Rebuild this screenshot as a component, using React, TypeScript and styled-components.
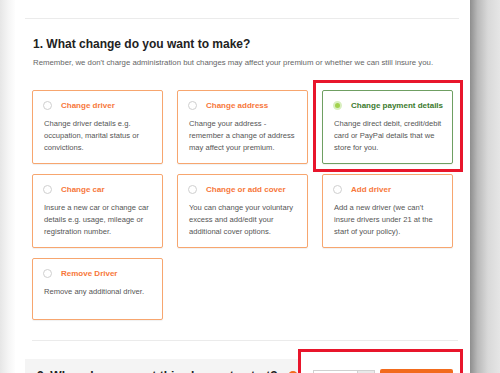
import styled, { createGlobalStyle } from "styled-components";

const GlobalStyle = createGlobalStyle`
  html, body {
    margin: 0;
    padding: 0;
    background: #fff;
  }
  body {
    font-family: "Liberation Sans", Arial, Helvetica, sans-serif;
  }
`;

interface iOption {
  title: string;
  text: string;
  selected?: boolean;
}

const options: iOption[] = [
  {
    title: "Change driver",
    text: "Change driver details e.g. occupation, marital status or convictions.",
  },
  {
    title: "Change address",
    text: "Change your address - remember a change of address may affect your premium.",
  },
  {
    title: "Change payment details",
    text: "Change direct debit, credit/debit card or PayPal details that we store for you.",
    selected: true,
  },
  {
    title: "Change car",
    text: "Insure a new car or change car details e.g. usage, mileage or registration number.",
  },
  {
    title: "Change or add cover",
    text: "You can change your voluntary excess and add/edit your additional cover options.",
  },
  {
    title: "Add driver",
    text: "Add a new driver (we can't insure drivers under 21 at the start of your policy).",
  },
  {
    title: "Remove Driver",
    text: "Remove any additional driver.",
  },
];

const Page = styled.div`
  display: flex;
  height: 373px;
  overflow: hidden;
`;

const LeftShade = styled.div`
  width: 15px;
  flex-shrink: 0;
  background: linear-gradient(to right, #e6e6e6, #f6f6f6 60%, #fdfdfd);
`;

const RightShade = styled.div`
  flex: 1;
  background: linear-gradient(to right, #8e8e8e, #b9b9b9 25%, #d9d9d9 60%, #e6e6e6);
`;

const Panel = styled.div`
  width: 455px;
  flex-shrink: 0;
  background: #fff;
  padding: 18px 0 0 10px;
  box-sizing: border-box;
`;

const Rule = styled.div<{ width: number }>`
  height: 1px;
  width: ${({ width }) => width}px;
  background: #ebebeb;
`;

const Section = styled.div`
  padding-left: 7px;
`;

const Heading = styled.h2`
  margin: 18px 0 0 1px;
  font-size: 12px;
  line-height: 14px;
  font-weight: 700;
  color: #222;
`;

const Intro = styled.p`
  margin: 7px 0 0 1px;
  font-size: 7.8px;
  line-height: 10px;
  color: #666;
`;

const Grid = styled.div`
  display: grid;
  grid-template-columns: repeat(3, 131px);
  column-gap: 14px;
  row-gap: 10px;
  margin-top: 22px;
`;

const Card = styled.div<{ selected?: boolean }>`
  position: relative;
  box-sizing: border-box;
  min-height: 62px;
  padding: 8px 8px 9px 10px;
  border: 1px solid ${({ selected }) => (selected ? "#6f9f62" : "#f7a66f")};
  border-radius: 2px;
  background: #fff;
  box-shadow: 0 1px 1px rgba(0, 0, 0, 0.06);
`;

const CardHead = styled.div`
  display: flex;
  align-items: center;
  height: 12px;
`;

const Radio = styled.span<{ selected?: boolean }>`
  width: 9px;
  height: 9px;
  box-sizing: border-box;
  border-radius: 50%;
  margin-right: 9px;
  flex-shrink: 0;
  border: ${({ selected }) => (selected ? "2px solid #d9efc0" : "1px solid #cfcfcf")};
  background: ${({ selected }) => (selected ? "#a2d24e" : "#fff")};
`;

const CardTitle = styled.span<{ selected?: boolean }>`
  font-size: 8px;
  font-weight: 700;
  color: ${({ selected }) => (selected ? "#3b7a2d" : "#f7773a")};
`;

const CardText = styled.p`
  margin: 7px 0 0 1px;
  font-size: 7.6px;
  line-height: 12px;
  color: #555;
`;

const Callout = styled.div`
  position: absolute;
  top: -11px;
  left: -10px;
  right: -11px;
  bottom: -9px;
  border: 3px solid #e8152b;
  pointer-events: none;
`;

const BottomRule = styled(Rule)`
  margin-top: 20px;
`;

const Band = styled.div`
  position: relative;
  display: flex;
  align-items: flex-start;
  gap: 10px;
  margin-top: 18px;
  height: 40px;
  padding: 10px 0 0 12px;
  box-sizing: border-box;
  background: #f4f4f4;
  width: 438px;
`;

const BandTitle = styled.span`
  font-size: 12px;
  line-height: 14px;
  font-weight: 700;
  color: #222;
`;

const Help = styled.span`
  width: 10px;
  height: 10px;
  margin-top: 2px;
  border-radius: 50%;
  background: #f26b1d;
`;

const DateBox = styled.div`
  position: absolute;
  left: 273px;
  top: -10px;
  width: 165px;
  height: 60px;
  box-sizing: border-box;
  border: 3px solid #e8152b;
  background: #fff;
  display: flex;
  align-items: flex-start;
  padding: 17px 0 0 12px;
`;

const DateInput = styled.div`
  width: 44px;
  height: 20px;
  box-sizing: border-box;
  border: 1px solid #d0d0d0;
  border-right: none;
  margin-top: 1px;
  background: #fff;
`;

const Addon = styled.div`
  width: 18px;
  height: 20px;
  box-sizing: border-box;
  border: 1px solid #d0d0d0;
  margin-top: 1px;
  background: #e9e9e9;
`;

const Go = styled.div`
  width: 73px;
  height: 22px;
  margin-left: 5px;
  border-radius: 2px;
  background: #f26b1d;
`;

export default function App() {
  return (
    <>
      <GlobalStyle />
      <Page>
        <LeftShade />
        <Panel>
          <Rule width={434} />
          <Section>
            <Heading>1. What change do you want to make?</Heading>
            <Intro>
              Remember, we don't charge administration but changes may affect your premium or
              whether we can still insure you.
            </Intro>
            <Grid>
              {options.map((o) => (
                <Card key={o.title} selected={o.selected}>
                  <CardHead>
                    <Radio selected={o.selected} />
                    <CardTitle selected={o.selected}>{o.title}</CardTitle>
                  </CardHead>
                  <CardText>{o.text}</CardText>
                  {o.selected && <Callout />}
                </Card>
              ))}
            </Grid>
            <BottomRule width={426} />
          </Section>
          <Band>
            <BandTitle>2. When do you want this change to start?</BandTitle>
            <Help />
            <DateBox>
              <DateInput />
              <Addon />
              <Go />
            </DateBox>
          </Band>
        </Panel>
        <RightShade />
      </Page>
    </>
  );
}
